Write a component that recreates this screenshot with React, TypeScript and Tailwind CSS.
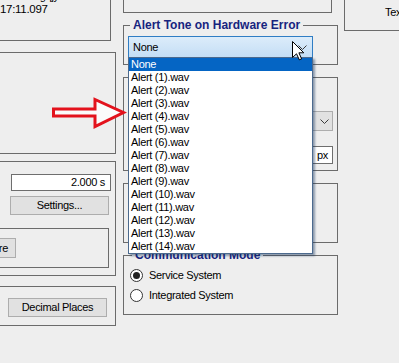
import React from "react";

const tones = ["None", ...Array.from({ length: 14 }, (_, i) => `Alert (${i + 1}).wav`)];

const line = "border-[#6b6b6b]";

function Chevron({ className }: { className?: string }) {
  return (
    <svg viewBox="0 0 9 5" className={className} fill="none" stroke="#3a3a3a" strokeWidth="1">
      <path d="M0.5 0.5 L4.5 4.5 L8.5 0.5" />
    </svg>
  );
}

function Radio({ label, checked }: { label: string; checked?: boolean }) {
  return (
    <div className="flex items-center h-[20px] pl-[6px] gap-[6px]">
      <span className="w-[13px] h-[13px] rounded-full border border-[#333] bg-white flex items-center justify-center">
        {checked && <span className="w-[7px] h-[7px] rounded-full bg-[#222]" />}
      </span>
      <span>{label}</span>
    </div>
  );
}

function WinButton({ label, className }: { label: string; className?: string }) {
  return (
    <button
      className={
        "h-[19px] bg-[#e1e1e1] border border-[#adadad] flex items-center " + (className || "justify-center")
      }
    >
      {label}
    </button>
  );
}

export default function App() {
  return (
    <div className="relative w-[399px] h-[363px] overflow-hidden bg-[#eeeeee] text-black text-[11px] leading-[13px] tracking-[-0.3px] font-['Liberation_Sans',Arial,sans-serif]">
      <div className="flex items-start ml-[-12px]">
        {/* Left column */}
        <div className="flex flex-col w-[128px] shrink-0">
          <div className={`mt-[-20px] h-[61px] w-[123px] border-r border-b ${line} pl-[12px] pt-[10px]`}>
            <div>17:08 &nbsp;&nbsp;&nbsp; gqjy</div>
            <div className="text-[11.5px]">17:11.097</div>
          </div>

          <div className={`mt-[11px] h-[102px] border ${line}`} />

          <div className={`mt-[7px] h-[115px] border ${line} flex flex-col`}>
            <div className="ml-[22px] mt-[12px] w-[100px] h-[17px] bg-white border border-[#6e6e6e] flex items-center justify-end pr-[5px]">
              2.000 s
            </div>
            <WinButton label="Settings..." className="justify-center ml-[21px] mt-[5px] w-[99px]" />
            <div className={`mt-[13px] w-[120px] h-[40px] border ${line}`}>
              <WinButton label="Compare" className="justify-end pr-[7px] ml-[-25px] mt-[9px] w-[51px] h-[20px]" />
            </div>
          </div>

          <div className={`mt-[10px] h-[40px] border ${line}`}>
            <WinButton label="Decimal Places" className="justify-center ml-[19px] mt-[11px] w-[99px]" />
          </div>
        </div>

        {/* Middle column */}
        <div className="flex flex-col w-[215px] ml-[7px] shrink-0">
          <div className={`mt-[-20px] h-[33px] w-[209px] border ${line}`} />

          <fieldset className={`mt-[6px] border ${line} pb-[6px]`}>
            <legend className="ml-[6px] px-[3px] text-[12px] leading-[13px] font-bold tracking-normal text-[#17247f]">
              Alert Tone on Hardware Error
            </legend>
            <div className="ml-[4px] mt-[4px] w-[185px] h-[22px] border border-[#2f7dc4] bg-gradient-to-b from-[#dcecfa] to-[#c4def5] flex items-center justify-between pl-[4px] pr-[5px]">
              <span>None</span>
              <Chevron className="w-[9px] h-[5px]" />
            </div>
          </fieldset>

          <div className={`mt-[12px] h-[94px] border ${line} flex flex-col items-end pr-[4px]`}>
            <div className="mt-[33px] w-[132px] h-[20px] border border-[#adadad] bg-[#e1e1e1] flex items-center justify-end pr-[3px]">
              <Chevron className="w-[9px] h-[5px]" />
            </div>
            <div className="mt-[15px] w-[40px] h-[18px] bg-white border border-[#6e6e6e] flex items-center justify-end pr-[4px]">
              px
            </div>
          </div>

          <div className={`mt-[12px] h-[60px] border ${line}`} />

          <fieldset className={`mt-[6px] border ${line} pb-[9px]`}>
            <legend className="ml-[8px] px-[3px] text-[12px] leading-[13px] font-bold tracking-normal text-[#17247f]">
              Communication Mode
            </legend>
            <div className="mt-[3px]">
              <Radio label="Service System" checked />
              <Radio label="Integrated System" />
            </div>
          </fieldset>
        </div>

        {/* Right column */}
        <div className={`ml-[6px] mt-[-20px] h-[51px] w-[100px] shrink-0 border ${line} pl-[40px] pt-[25px]`}>
          Text
        </div>
      </div>

      {/* Open dropdown list */}
      <ul className="absolute left-[128px] top-[57px] w-[185px] bg-white border border-[#4c6a8e] shadow-[2px_2px_2px_rgba(20,50,90,0.45)]">
        {tones.map((t, i) => (
          <li
            key={t}
            className={
              "h-[13px] pl-[2px] leading-[13px] " + (i === 0 ? "bg-[#0565c4] text-white" : "text-black")
            }
          >
            {t}
          </li>
        ))}
      </ul>

      {/* Red annotation arrow */}
      <svg className="absolute left-[48px] top-[94px] w-[82px] h-[38px]" viewBox="0 0 82 38">
        <polygon
          points="5.5,15 47,15 47,5.5 75.5,18.5 47,32.5 47,22 5.5,22"
          fill="#fbfbfb"
          stroke="#e3121c"
          strokeWidth="3"
          strokeLinejoin="miter"
        />
      </svg>

      {/* Mouse cursor */}
      <svg className="absolute left-[292px] top-[41px] w-[13px] h-[20px]" viewBox="0 0 13 20">
        <path
          d="M0.5 0.5 V16.5 L4.5 12.8 L7.3 18.8 L9.6 17.8 L6.9 11.8 H11.8 Z"
          fill="white"
          stroke="black"
          strokeWidth="1"
          strokeLinejoin="round"
        />
      </svg>
    </div>
  );
}
